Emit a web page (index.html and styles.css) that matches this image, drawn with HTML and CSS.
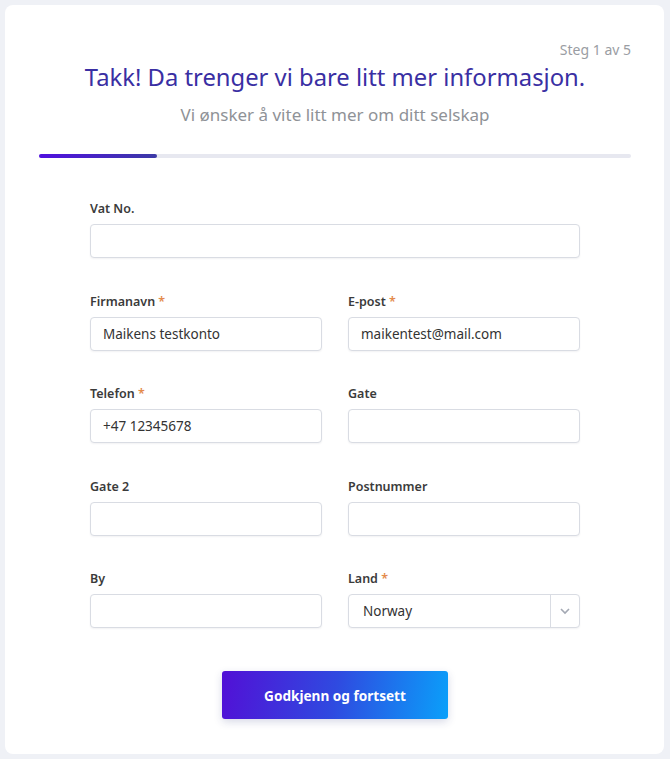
FILE: index.html
```html
<html>
    <head>
        <meta charset="utf-8">
        <link rel="stylesheet" href="styles.css">
    </head>
    <body>
        <div class="card">
            <div class="step">Steg 1 av 5</div>
            <h1 class="title">Takk! Da trenger vi bare litt mer informasjon.</h1>
            <p class="subtitle">Vi ønsker å vite litt mer om ditt selskap</p>
            <div class="progress"><div class="progress-fill"></div></div>

            <form class="form">
                <div class="field full">
                    <label>Vat No.</label>
                    <input type="text" value="">
                </div>
                <div class="field">
                    <label>Firmanavn <span class="req">*</span></label>
                    <input type="text" value="Maikens testkonto">
                </div>
                <div class="field">
                    <label>E-post <span class="req">*</span></label>
                    <input type="text" value="maikentest@mail.com">
                </div>
                <div class="field">
                    <label>Telefon <span class="req">*</span></label>
                    <input type="text" value="+47 12345678">
                </div>
                <div class="field">
                    <label>Gate</label>
                    <input type="text" value="">
                </div>
                <div class="field">
                    <label>Gate 2</label>
                    <input type="text" value="">
                </div>
                <div class="field">
                    <label>Postnummer</label>
                    <input type="text" value="">
                </div>
                <div class="field">
                    <label>By</label>
                    <input type="text" value="">
                </div>
                <div class="field">
                    <label>Land <span class="req">*</span></label>
                    <div class="select">
                        <span class="select-value">Norway</span>
                        <span class="select-arrow">
                            <svg width="12" height="8" viewBox="0 0 12 8">
                                <path d="M2 2l4 4 4-4" fill="none" stroke="#a3a8b3" stroke-width="1.6"/>
                            </svg>
                        </span>
                    </div>
                </div>
            </form>

            <div class="actions">
                <button class="btn" type="button">Godkjenn og fortsett</button>
            </div>
        </div>
    </body>
</html>
```

FILE: styles.css
```css
body {
    margin: 0;
    background: #eff1f6;
    font-family: "Noto Sans", "Open Sans", sans-serif;
    color: #333;
}

.card {
    margin: 5px 6px 5px 5px;
    min-height: 749px;
    box-sizing: border-box;
    background: #fff;
    border-radius: 8px;
    padding: 35px 33px 34px 34px;
}

.step {
    text-align: right;
    font-size: 14px;
    line-height: 20px;
    color: #9a9da3;
}

.title {
    margin: 2px 0 0;
    text-align: center;
    font-size: 23.8px;
    line-height: 30px;
    font-weight: 400;
    color: #3a2fa3;
}

.subtitle {
    margin: 11px 0 0;
    text-align: center;
    font-size: 17px;
    line-height: 24px;
    color: #8f9297;
}

.progress {
    margin-top: 27px;
    height: 4px;
    border-radius: 2px;
    background: #e7e8f0;
}

.progress-fill {
    width: 20%;
    height: 100%;
    border-radius: 2px;
    background: linear-gradient(90deg, #5010df, #3c3aa6);
}

.form {
    width: 490px;
    margin: 42px auto 0;
    display: grid;
    grid-template-columns: 1fr 1fr;
    column-gap: 26px;
    row-gap: 34.5px;
}

.field.full {
    grid-column: 1 / 3;
}

.field label {
    display: block;
    font-size: 12.5px;
    line-height: 18px;
    font-weight: 600;
    color: #3b3b3b;
    margin-bottom: 6px;
}

.req {
    color: #e48a4c;
}

.field input,
.select {
    display: block;
    width: 100%;
    height: 34px;
    box-sizing: border-box;
    border: 1px solid #d9dce3;
    border-radius: 4px;
    box-shadow: 0 1px 2px rgba(30, 40, 70, 0.06);
    padding: 0 12px;
    font-family: inherit;
    font-size: 13.5px;
    color: #333;
    background: #fff;
    outline: none;
}

.select {
    display: flex;
    align-items: center;
    padding: 0 0 0 14px;
}

.select-value {
    flex: 1;
}

.select-arrow {
    width: 28px;
    height: 100%;
    border-left: 1px solid #d9dce3;
    display: flex;
    align-items: center;
    justify-content: center;
}

.actions {
    margin-top: 43px;
    display: flex;
    justify-content: center;
}

.btn {
    width: 226px;
    height: 48px;
    border: none;
    border-radius: 3px;
    background: linear-gradient(100deg, #5210d6 0%, #2f4ae0 50%, #0aa0fa 100%);
    color: #fff;
    font-family: inherit;
    font-size: 13.6px;
    font-weight: 700;
    box-shadow: 0 3px 8px rgba(40, 50, 120, 0.18);
    cursor: pointer;
}
```
